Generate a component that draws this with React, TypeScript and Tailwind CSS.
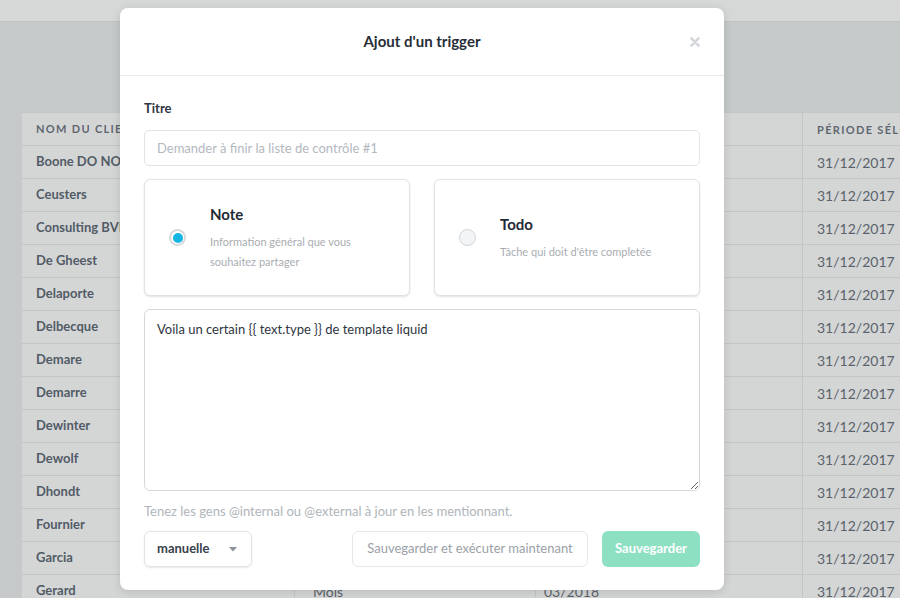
import { useState } from "react";

const rows = [
  "Boone DO NOT USE",
  "Ceusters",
  "Consulting BVBA",
  "De Gheest",
  "Delaporte",
  "Delbecque",
  "Demare",
  "Demarre",
  "Dewinter",
  "Dewolf",
  "Dhondt",
  "Fournier",
  "Garcia",
  "Gerard",
];

type Kind = "note" | "todo";

function Radio({ checked }: { checked: boolean }) {
  return checked ? (
    <span className="flex h-[17px] w-[17px] shrink-0 items-center justify-center rounded-full border-2 border-[#d6d9dd] bg-white">
      <span className="h-[10px] w-[10px] rounded-full bg-[#16b5e2]" />
    </span>
  ) : (
    <span className="h-[17px] w-[17px] shrink-0 rounded-full border border-[#cfd3d7] bg-[#f3f4f5]" />
  );
}

function KindCard({
  title,
  desc,
  checked,
  onClick,
}: {
  title: string;
  desc: string;
  checked: boolean;
  onClick: () => void;
}) {
  return (
    <button
      onClick={onClick}
      className="flex h-[117px] flex-1 items-center gap-[24px] rounded-[6px] border border-[#e1e3e5] bg-white pl-[24px] text-left shadow-[0_1px_2px_rgba(0,0,0,0.12)]"
    >
      <Radio checked={checked} />
      <div className="flex w-[170px] flex-col">
        <span className="text-[15px] font-bold leading-[20px] text-[#232a33]">{title}</span>
        <span className="mt-[8px] text-[11px] leading-[20px] text-[#a9adb2]">{desc}</span>
      </div>
    </button>
  );
}

export default function App() {
  const [kind, setKind] = useState<Kind>("note");

  return (
    <div className="relative h-[598px] w-[900px] overflow-hidden bg-[#c6c9ca] font-['Lato',sans-serif]">
      {/* BACKGROUND PAGE (dimmed) */}
      <div className="h-[22px] border-b border-[#c0c3c4] bg-[#d6d8d7]" />
      <div className="pl-[22px] pt-[90px]">
        <div className="border-t border-[#c3c6c7] bg-[#d4d6d6]">
          <div className="flex h-[33px] items-center border-b border-[#c3c6c7] text-[11px] font-bold uppercase tracking-[0.12em] text-[#5f6770]">
            <div className="w-[272px] shrink-0 pl-[14px]">Nom du client</div>
            <div className="w-[241px] shrink-0 border-l border-[#c3c6c7] pl-[14px] leading-[33px]">Fréquence</div>
            <div className="w-[267px] shrink-0 border-l border-[#c3c6c7] pl-[14px] leading-[33px]">Période</div>
            <div className="flex-1 whitespace-nowrap border-l border-[#c3c6c7] pl-[14px] leading-[33px]">Période sélectionnée</div>
          </div>
          {rows.map((name) => (
            <div key={name} className="flex h-[33px] items-center border-b border-[#c3c6c7] first:h-[34px] first:pt-px">
              <div className="w-[272px] shrink-0 truncate pl-[14px] text-[13px] font-bold text-[#525b66]">{name}</div>
              <div className="w-[241px] shrink-0 border-l border-[#c3c6c7] pl-[18px] text-[14px] leading-[33px] text-[#5a626b]">Mois</div>
              <div className="w-[267px] shrink-0 border-l border-[#c3c6c7] pl-[8px] text-[14px] leading-[33px] text-[#5a626b]">03/2018</div>
              <div className="flex-1 border-l border-[#c3c6c7] pl-[14px] text-[14px] leading-[33px] text-[#5a626b]">31/12/2017</div>
            </div>
          ))}
        </div>
      </div>

      {/* MODAL */}
      <div className="absolute left-[120px] top-[8px] flex h-[582px] w-[604px] flex-col rounded-[8px] bg-white shadow-[0_2px_10px_rgba(0,0,0,0.12)]">
        <div className="relative flex h-[68px] shrink-0 items-center justify-center border-b border-[#e9eaeb]">
          <h2 className="text-[15px] font-bold text-[#272e37]">Ajout d'un trigger</h2>
          <button className="absolute right-[24px] top-[29px] text-[#d3d6da]">
            <svg width="10" height="10" viewBox="0 0 10 10">
              <path d="M1.5 1.5 L8.5 8.5 M8.5 1.5 L1.5 8.5" stroke="currentColor" strokeWidth="2.6" strokeLinecap="round" />
            </svg>
          </button>
        </div>

        <div className="flex flex-1 flex-col px-[24px] pt-[22px]">
          <label className="text-[13px] font-bold leading-[20px] text-[#2f3742]">Titre</label>
          <input
            placeholder="Demander à finir la liste de contrôle #1"
            className="mt-[12px] h-[36px] rounded-[5px] border border-[#e1e3e5] px-[12px] text-[13px] text-[#333] outline-none placeholder:text-[#b3b8bf]"
          />

          <div className="mt-[13px] flex gap-[24px]">
            <KindCard
              title="Note"
              desc="Information général que vous souhaitez partager"
              checked={kind === "note"}
              onClick={() => setKind("note")}
            />
            <KindCard
              title="Todo"
              desc="Tâche qui doit d'être completée"
              checked={kind === "todo"}
              onClick={() => setKind("todo")}
            />
          </div>

          <textarea
            defaultValue="Voila un certain {{ text.type }} de template liquid"
            className="mt-[13px] h-[182px] rounded-[6px] border border-[#d5d8db] px-[12px] py-[9px] text-[13px] leading-[20px] text-[#2f3540] outline-none"
          />

          <p className="mt-[10px] text-[13px] leading-[20px] text-[#b0b5ba]">
            Tenez les gens @internal ou @external à jour en les mentionnant.
          </p>

          <div className="mt-[10px] flex items-center">
            <button className="flex h-[36px] w-[108px] items-center justify-between rounded-[6px] border border-[#e1e3e5] pl-[12px] pr-[14px] shadow-[0_1px_2px_rgba(0,0,0,0.1)]">
              <span className="text-[13px] font-bold text-[#38414c]">manuelle</span>
              <svg width="8" height="5" viewBox="0 0 8 5">
                <path d="M0 0 H8 L4 4.5 Z" fill="#8b929a" />
              </svg>
            </button>
            <div className="flex-1" />
            <button className="h-[36px] w-[236px] rounded-[6px] border border-[#e5e7e9] text-[13px] text-[#9ba1a7]">
              Sauvegarder et exécuter maintenant
            </button>
            <button className="ml-[14px] h-[36px] w-[98px] rounded-[6px] bg-[#8ee0c3] text-[13px] font-bold text-white">
              Sauvegarder
            </button>
          </div>
        </div>
      </div>
    </div>
  );
}
